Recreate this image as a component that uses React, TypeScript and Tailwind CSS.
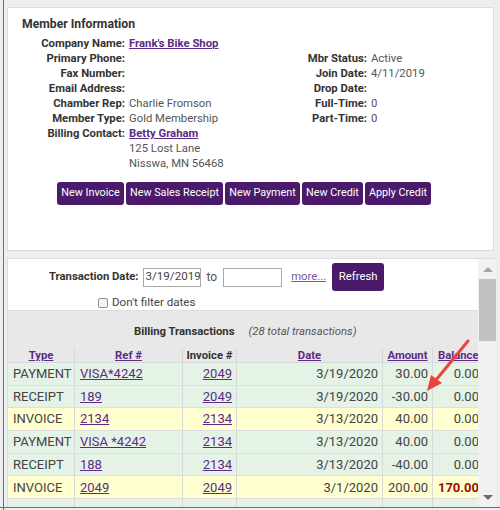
import React from "react";

const font = { fontFamily: "Roboto, 'Noto Sans', Arial, sans-serif" };

function InfoRow({ label, children, lw }: { label: string; children?: React.ReactNode; lw: string }) {
  return (
    <div className="flex h-[15px] items-center leading-[15px]">
      <div className={`${lw} shrink-0 text-right font-bold text-[#333]`}>{label}</div>
      <div className="pl-[4px] text-[#555] whitespace-nowrap">{children}</div>
    </div>
  );
}

const Link = ({ children, bold }: { children: React.ReactNode; bold?: boolean }) => (
  <span className={`text-[#5b2b86] underline ${bold ? "font-bold" : ""}`}>{children}</span>
);

type Row = { type: string; ref: string; inv: string; date: string; amt: string; bal: string; kind: "g" | "y"; red?: boolean };

const rows: Row[] = [
  { type: "PAYMENT", ref: "VISA*4242", inv: "2049", date: "3/19/2020", amt: "30.00", bal: "0.00", kind: "g" },
  { type: "RECEIPT", ref: "189", inv: "2049", date: "3/19/2020", amt: "-30.00", bal: "0.00", kind: "g" },
  { type: "INVOICE", ref: "2134", inv: "2134", date: "3/13/2020", amt: "40.00", bal: "0.00", kind: "y" },
  { type: "PAYMENT", ref: "VISA *4242", inv: "2134", date: "3/13/2020", amt: "40.00", bal: "0.00", kind: "g" },
  { type: "RECEIPT", ref: "188", inv: "2134", date: "3/13/2020", amt: "-40.00", bal: "0.00", kind: "g" },
  { type: "INVOICE", ref: "2049", inv: "2049", date: "3/1/2020", amt: "200.00", bal: "170.00", kind: "y", red: true },
  { type: "", ref: "", inv: "", date: "", amt: "", bal: "", kind: "g" },
];

const cols = "grid grid-cols-[67px_108px_54px_146px_50px_50px]";

export default function App() {
  return (
    <div className="w-[500px] h-[510px] bg-[#eeeeee] overflow-hidden relative text-[11.3px]" style={font}>
      <div className="absolute left-[3px] top-0 bottom-0 w-[1px] bg-[#6f6f6f]" />
      <div className="absolute left-0 right-0 top-[507px] h-[1px] bg-[#6f6f6f]" />
      <div className="pl-[7px] pt-[7px] pr-[3px] flex flex-col gap-[7px]">
        {/* Top panel */}
        <div className="w-[487px] h-[244px] bg-white border border-[#dcdcdc] relative">
          <div className="pl-[14px] pt-[8px] font-bold text-[12.2px] text-[#333] leading-[16px]">Member Information</div>
          <div className="flex mt-[4px]">
            <div className="w-[283px] flex flex-col">
              <InfoRow lw="w-[117px]" label="Company Name:"><Link bold>Frank's Bike Shop</Link></InfoRow>
              <InfoRow lw="w-[117px]" label="Primary Phone:" />
              <InfoRow lw="w-[117px]" label="Fax Number:" />
              <InfoRow lw="w-[117px]" label="Email Address:" />
              <InfoRow lw="w-[117px]" label="Chamber Rep:">Charlie Fromson</InfoRow>
              <InfoRow lw="w-[117px]" label="Member Type:">Gold Membership</InfoRow>
              <InfoRow lw="w-[117px]" label="Billing Contact:"><Link bold>Betty Graham</Link></InfoRow>
              <InfoRow lw="w-[117px]" label="">125 Lost Lane</InfoRow>
              <InfoRow lw="w-[117px]" label="">Nisswa, MN 56468</InfoRow>
            </div>
            <div className="flex flex-col mt-[15px]">
              <InfoRow lw="w-[76px]" label="Mbr Status:">Active</InfoRow>
              <InfoRow lw="w-[76px]" label="Join Date:">4/11/2019</InfoRow>
              <InfoRow lw="w-[76px]" label="Drop Date:" />
              <InfoRow lw="w-[76px]" label="Full-Time:">0</InfoRow>
              <InfoRow lw="w-[76px]" label="Part-Time:">0</InfoRow>
            </div>
          </div>
          <div className="flex gap-[2px] ml-[49px] mt-[11px]">
            {[
              ["New Invoice", "w-[67px]"],
              ["New Sales Receipt", "w-[97px]"],
              ["New Payment", "w-[75px]"],
              ["New Credit", "w-[61px]"],
              ["Apply Credit", "w-[66px]"],
            ].map(([t, w]) => (
              <div key={t} className={`${w} h-[23px] rounded-[3px] bg-[#4b1a6a] text-white flex items-center justify-center whitespace-nowrap text-[10.8px]`}>
                {t}
              </div>
            ))}
          </div>
        </div>

        {/* Bottom panel */}
        <div className="w-[490px] h-[249px] bg-white border-t border-l border-[#dcdcdc] flex relative">
          <div className="w-[470px] overflow-hidden flex flex-col">
            <div className="h-[53px] relative">
              <div className="flex items-center h-[28px] mt-[4px]">
                <span className="ml-[41px] font-bold text-[#333]">Transaction Date:</span>
                <div className="ml-[4px] w-[58px] h-[19px] border border-[#a9a9a9] text-[#444] text-[11.6px] flex items-center pl-[2px] leading-none overflow-hidden whitespace-nowrap">3/19/2019</div>
                <span className="ml-[6px] text-[#555] text-[12px]">to</span>
                <div className="ml-[6px] w-[59px] h-[19px] border border-[#a9a9a9]" />
                <span className="ml-[9px] text-[#7a58a0] underline text-[11.3px]">more...</span>
                <div className="ml-[6px] w-[52px] h-[28px] rounded-[3px] bg-[#4b1a6a] text-white flex items-center justify-center text-[11.3px]">Refresh</div>
              </div>
              <div className="flex items-center mt-[5px] ml-[90px] h-[14px]">
                <div className="w-[10px] h-[10px] rounded-[2px] border border-[#8f8f8f] bg-[#f4f4f4]" />
                <span className="ml-[4px] text-[#444] text-[11.6px]">Don't filter dates</span>
              </div>
            </div>
            <div className="flex-1 bg-[#e8e8e8] border-t border-[#dedede]">
              <div className="h-[37px] flex items-center pt-[6px]">
                <span className="ml-[126px] font-bold text-[#333]">Billing Transactions</span>
                <span className="ml-[14px] italic text-[#555]">(28 total transactions)</span>
              </div>
              <div className={`${cols} h-[15px] items-center border-b border-[#d8d8d8] w-[475px]`}>
                <div className="text-center font-bold border-r border-[#d8d8d8] h-full leading-[15px]"><Link bold>Type</Link></div>
                <div className="text-center font-bold border-r border-[#d8d8d8] h-full leading-[15px]"><Link bold>Ref #</Link></div>
                <div className="text-center font-bold text-[#333] border-r border-[#d8d8d8] h-full leading-[15px]">Invoice #</div>
                <div className="text-center font-bold border-r border-[#d8d8d8] h-full leading-[15px]"><Link bold>Date</Link></div>
                <div className="text-center font-bold border-r border-[#d8d8d8] h-full leading-[15px]"><Link bold>Amount</Link></div>
                <div className="pl-[5px] font-bold h-full leading-[15px] whitespace-nowrap"><Link bold>Balance</Link></div>
              </div>
              {rows.map((r, i) => (
                <div
                  key={i}
                  className={`${cols} h-[22.7px] items-stretch border-b border-[#dedede] w-[475px] text-[13px] text-[#444] ${r.kind === "g" ? "bg-[#e5f2e6]" : "bg-[#ffffcf]"}`}
                >
                  <div className="pl-[5px] flex items-center border-r border-[#d8d8d8]">{r.type}</div>
                  <div className="pl-[5px] flex items-center border-r border-[#d8d8d8]"><Link>{r.ref}</Link></div>
                  <div className="pr-[4px] flex items-center justify-end border-r border-[#d8d8d8]"><Link>{r.inv}</Link></div>
                  <div className="pr-[4px] flex items-center justify-end border-r border-[#d8d8d8]">{r.date}</div>
                  <div className="pr-[4px] flex items-center justify-end border-r border-[#d8d8d8]">{r.amt}</div>
                  <div className={`pr-[4px] flex items-center justify-end ${r.red ? "font-bold text-[#9b0d0d]" : ""}`}>{r.bal}</div>
                </div>
              ))}
            </div>
          </div>
          {/* scrollbar */}
          <div className="w-[19px] bg-[#f1f1f1] flex flex-col items-center">
            <div className="h-[20px] flex items-center justify-center">
              <div className="w-0 h-0 border-l-[5px] border-r-[5px] border-b-[5px] border-l-transparent border-r-transparent border-b-[#a3a3a3]" />
            </div>
            <div className="w-[17px] h-[62px] bg-[#c1c1c1]" />
            <div className="flex-1" />
            <div className="h-[20px] flex items-center justify-center">
              <div className="w-0 h-0 border-l-[5px] border-r-[5px] border-t-[5px] border-l-transparent border-r-transparent border-t-[#6b6b6b]" />
            </div>
          </div>
        </div>
      </div>
      {/* red annotation arrow */}
      <svg className="absolute left-0 top-0 pointer-events-none" width="500" height="510">
        <line x1="468" y1="341" x2="436" y2="380" stroke="#e8453c" strokeWidth="3" strokeLinecap="round" />
        <polygon points="427,391 431,375 442,383" fill="#e8453c" />
      </svg>
    </div>
  );
}
